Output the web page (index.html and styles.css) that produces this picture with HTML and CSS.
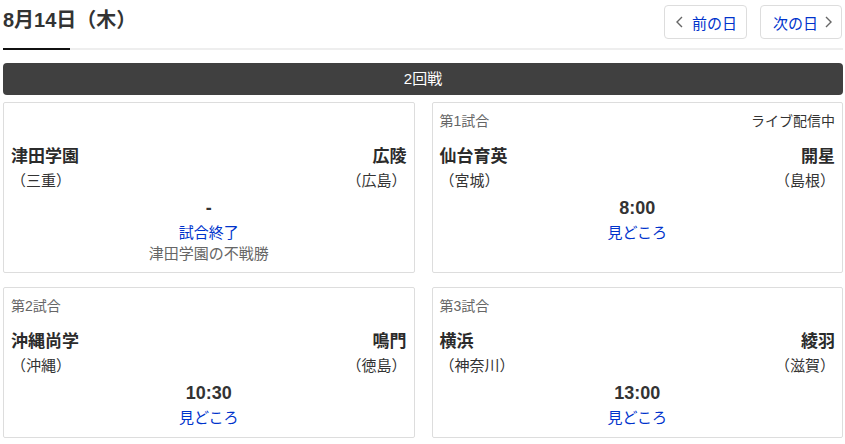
FILE: index.html
```html
<!DOCTYPE html>
<html lang="ja">
<head>
<meta charset="utf-8">
<title>8月14日（木）</title>
<link rel="stylesheet" href="styles.css">
</head>
<body>
<div class="page">
  <div class="head">
    <h1 class="title">8月14日（木）</h1>
    <nav class="daynav">
      <a class="daybtn prev" href="#"><svg class="chev" viewBox="0 0 8 12" width="8" height="12"><path d="M7 1 L2 6 L7 11" fill="none" stroke="#666" stroke-width="1.4"/></svg><span>前の日</span></a>
      <a class="daybtn next" href="#"><span>次の日</span><svg class="chev" viewBox="0 0 8 12" width="8" height="12"><path d="M1 1 L6 6 L1 11" fill="none" stroke="#666" stroke-width="1.4"/></svg></a>
    </nav>
  </div>
  <div class="rule"><div class="rule-active"></div></div>
  <div class="round">2回戦</div>
  <div class="games">
    <div class="card">
      <div class="card-head"><span class="label"></span><span class="live"></span></div>
      <div class="teams">
        <div class="team"><div class="name">津田学園</div><div class="pref">（三重）</div></div>
        <div class="team right"><div class="name">広陵</div><div class="pref">（広島）</div></div>
      </div>
      <div class="score">-</div>
      <a class="link" href="#">試合終了</a>
      <div class="note">津田学園の不戦勝</div>
    </div>
    <div class="card">
      <div class="card-head"><span class="label">第1試合</span><span class="live">ライブ配信中</span></div>
      <div class="teams">
        <div class="team"><div class="name">仙台育英</div><div class="pref">（宮城）</div></div>
        <div class="team right"><div class="name">開星</div><div class="pref">（島根）</div></div>
      </div>
      <div class="score">8:00</div>
      <a class="link" href="#">見どころ</a>
    </div>
    <div class="card">
      <div class="card-head"><span class="label">第2試合</span><span class="live"></span></div>
      <div class="teams">
        <div class="team"><div class="name">沖縄尚学</div><div class="pref">（沖縄）</div></div>
        <div class="team right"><div class="name">鳴門</div><div class="pref">（徳島）</div></div>
      </div>
      <div class="score">10:30</div>
      <a class="link" href="#">見どころ</a>
    </div>
    <div class="card">
      <div class="card-head"><span class="label">第3試合</span><span class="live"></span></div>
      <div class="teams">
        <div class="team"><div class="name">横浜</div><div class="pref">（神奈川）</div></div>
        <div class="team right"><div class="name">綾羽</div><div class="pref">（滋賀）</div></div>
      </div>
      <div class="score">13:00</div>
      <a class="link" href="#">見どころ</a>
    </div>
  </div>
</div>
</body>
</html>
```

FILE: styles.css
```css
* { box-sizing: border-box; }
html, body { margin: 0; padding: 0; background: #fff; }
body {
  font-family: "Liberation Sans", "Noto Sans CJK JP", sans-serif;
  color: #333;
}
a { text-decoration: none; }
.page { width: 840px; margin: 0 2px 0 3px; }

.head {
  display: flex;
  justify-content: space-between;
  align-items: flex-start;
  height: 48px;
}
.title {
  margin: 6px 0 0;
  font-size: 20px;
  line-height: 28px;
  font-weight: bold;
  color: #333;
}
.daynav {
  display: flex;
  gap: 13px;
  margin-top: 5px;
  margin-right: 1px;
}
.daybtn {
  display: flex;
  align-items: center;
  height: 34px;
  border: 1px solid #ddd;
  border-radius: 4px;
  color: #0033cc;
  font-size: 15px;
}
.daybtn.prev { gap: 9px; padding: 0 9px 0 10px; }
.daybtn.next { gap: 7px; padding: 0 8px 0 12px; }
.chev { display: block; flex: none; }

.rule { height: 2px; background: #eee; }
.rule-active { width: 67px; height: 2px; background: #111; }

.round {
  margin-top: 13px;
  height: 32px;
  line-height: 32px;
  background: #404040;
  border-radius: 4px;
  color: #fff;
  text-align: center;
  font-size: 15px;
}

.games {
  margin-top: 7px;
  display: grid;
  grid-template-columns: 1fr 1fr;
  column-gap: 17px;
  row-gap: 14px;
}
.card {
  border: 1px solid #ddd;
  border-radius: 2px;
  padding: 7px 7px 8px;
  display: flex;
  flex-direction: column;
}
.card-head {
  display: flex;
  justify-content: space-between;
  height: 22px;
  line-height: 22px;
  font-size: 14px;
}
.label { color: #666; }
.live { color: #333; }
.teams {
  margin-top: 14px;
  display: flex;
  justify-content: space-between;
}
.team.right { text-align: right; }
.name {
  font-size: 17px;
  font-weight: bold;
  line-height: 22px;
  color: #2b2b2b;
}
.pref {
  font-size: 15px;
  line-height: 26px;
  color: #333;
}
.score {
  text-align: center;
  font-size: 18px;
  font-weight: bold;
  line-height: 28px;
  color: #333;
}
.link {
  align-self: center;
  font-size: 15px;
  line-height: 22px;
  color: #0033cc;
}
.note {
  text-align: center;
  font-size: 15px;
  line-height: 20px;
  color: #666;
}
```
